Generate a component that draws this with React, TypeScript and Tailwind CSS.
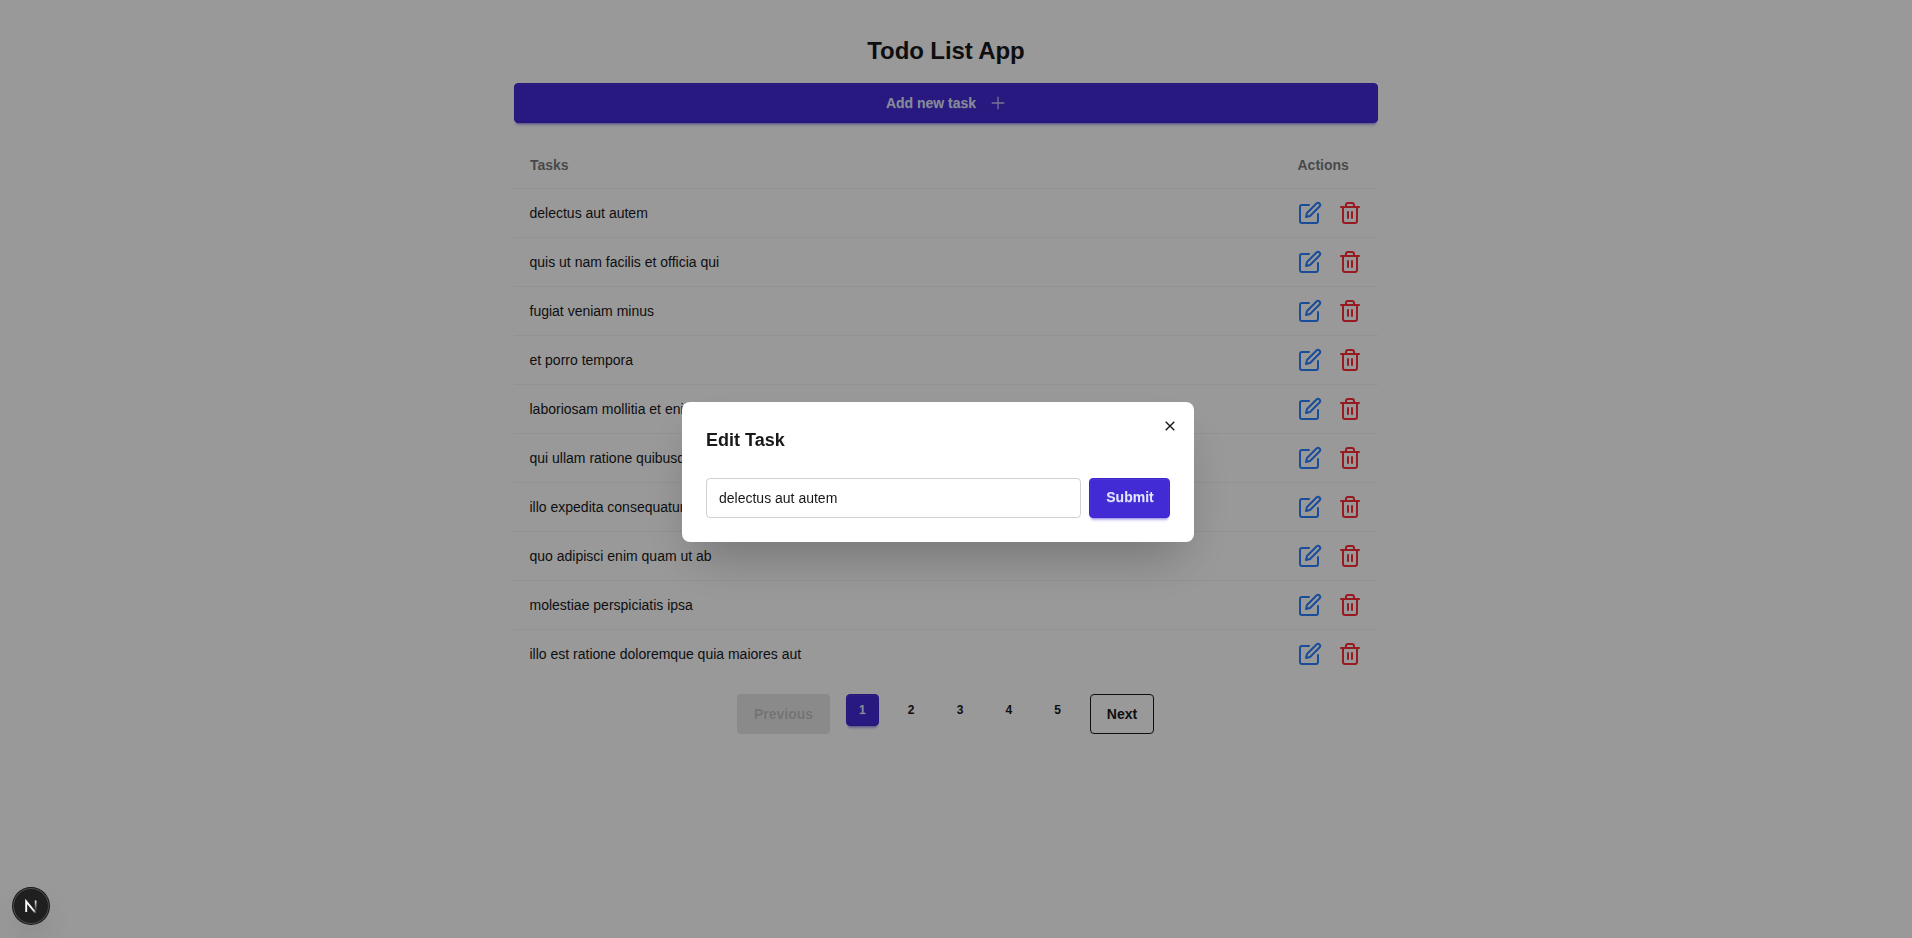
import { AiOutlinePlus } from "react-icons/ai";
import { FiEdit, FiTrash2 } from "react-icons/fi";

const tasks = [
  "delectus aut autem",
  "quis ut nam facilis et officia qui",
  "fugiat veniam minus",
  "et porro tempora",
  "laboriosam mollitia et enim quasi adipisci quia provident illum",
  "qui ullam ratione quibusdam voluptatem quia omnis",
  "illo expedita consequatur quia in",
  "quo adipisci enim quam ut ab",
  "molestiae perspiciatis ipsa",
  "illo est ratione doloremque quia maiores aut",
];

const primary =
  "border border-[#3d26cd] bg-[#422ad5] text-[#e0e7ff] shadow-[inset_0_0.5px_0_0.5px_rgba(255,255,255,0.06),0_3px_2px_-2px_rgba(66,42,213,0.3),0_4px_3px_-2px_rgba(66,42,213,0.3)] [text-shadow:0_0.5px_rgba(255,255,255,0.15)]";

function Header() {
  return (
    <div className="flex flex-col gap-4">
      <h1 className="text-center text-2xl font-bold tracking-[-0.1px]">Todo List App</h1>
      <button className={`flex h-10 w-full items-center justify-center gap-1.5 rounded-sm text-sm font-semibold ${primary}`}>
        <span className="-mr-px ml-px">Add new task</span>
        <AiOutlinePlus className="ml-2 opacity-80" size={18} />
      </button>
    </div>
  );
}

function TaskTable() {
  return (
    <div className="mt-5 mb-4 text-sm">
      <div className="flex h-[46px] items-center justify-between border-b border-[#18181b]/5 px-4 pb-px font-semibold text-[#18181b]/60">
        <span>Tasks</span>
        <span className="w-[64.5px]">Actions</span>
      </div>
      {tasks.map((task) => (
        <div
          key={task}
          className="flex h-[49px] items-center justify-between border-b border-[#18181b]/5 px-4 last:h-12 last:border-b-0"
        >
          <span className="-ml-[0.5px]">{task}</span>
          <span className="flex w-16 gap-4">
            <FiEdit className="shrink-0 text-blue-500" size={24} />
            <FiTrash2 className="shrink-0 text-red-500" size={24} />
          </span>
        </div>
      ))}
    </div>
  );
}

function Pagination() {
  return (
    <div className="flex items-start justify-center gap-4 pr-px font-semibold">
      <button className="h-10 w-[93px] rounded-sm bg-[#18181b]/10 text-sm text-[#18181b]/20">Previous</button>
      <button className={`h-8 w-[32.8px] rounded-sm text-xs ${primary}`}>1</button>
      {[2, 3, 4, 5].map((page) => (
        <button key={page} className="h-8 w-[32.8px] text-xs">
          {page}
        </button>
      ))}
      <button className="h-10 w-16 rounded-sm border border-[#18181b] text-sm">Next</button>
    </div>
  );
}

function EditModal() {
  return (
    <div className="fixed inset-0 flex items-start bg-black/40 pt-[402px] pl-[682px]">
      <div className="relative w-lg rounded-lg bg-white p-6 shadow-2xl">
        <button aria-label="Close" className="absolute top-2 right-2 flex size-8 items-center justify-center">
          <svg width="10" height="10" viewBox="0 0 10 10" fill="none" stroke="currentColor" strokeWidth="1.4">
            <path d="M0.7 0.7l8.6 8.6M9.3 0.7l-8.6 8.6" />
          </svg>
        </button>
        <h3 className="text-lg font-bold">Edit Task</h3>
        <form className="mt-6 flex gap-2">
          <input
            className="h-10 min-w-0 flex-1 rounded-sm border border-[#18181b]/20 px-3 text-sm outline-none"
            defaultValue="delectus aut autem"
          />
          <button type="button" className={`h-10 w-[81px] rounded-sm pb-0.5 pl-px text-sm font-semibold ${primary}`}>
            Submit
          </button>
        </form>
      </div>
    </div>
  );
}

function DevBadge() {
  return (
    <div className="fixed bottom-3.5 left-[13px] flex size-9 items-center justify-center rounded-full bg-[#1f1f1f] shadow-[0_0_0_1px_#171717,inset_0_0_0_1px_#4a4a4a,0_16px_32px_-8px_rgba(0,0,0,0.24)]">
      <svg width="36" height="36" viewBox="1 1 36 36" fill="none">
        <defs>
          <linearGradient id="diag" x1="20" y1="19" x2="24.5" y2="26" gradientUnits="userSpaceOnUse">
            <stop stopColor="#fff" />
            <stop offset="0.6" stopColor="#fff" stopOpacity="0.85" />
            <stop offset="1" stopColor="#fff" stopOpacity="0" />
          </linearGradient>
          <linearGradient id="stem" x1="23.5" y1="13" x2="23.5" y2="24" gradientUnits="userSpaceOnUse">
            <stop stopColor="#fff" />
            <stop offset="1" stopColor="#fff" stopOpacity="0" />
          </linearGradient>
        </defs>
        <path d="M14.2 25V14.4L23.8 26.2" stroke="url(#diag)" strokeWidth="1.9" />
        <rect x="22.8" y="13.5" width="1.7" height="10.5" fill="url(#stem)" />
      </svg>
    </div>
  );
}

export default function App() {
  return (
    <div className="min-h-screen bg-white font-['Liberation_Sans',Arial,sans-serif] text-[#18181b]">
      <main className="ml-[514px] w-[864px] pt-[35px]">
        <Header />
        <TaskTable />
        <Pagination />
      </main>
      <EditModal />
      <DevBadge />
    </div>
  );
}
